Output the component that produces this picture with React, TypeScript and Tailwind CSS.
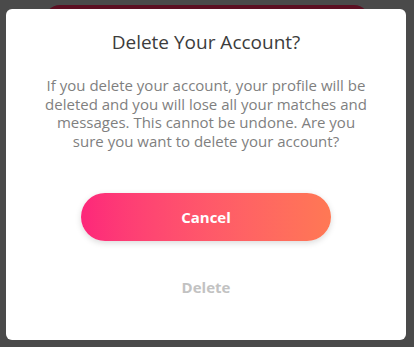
export default function App() {
  return (
    <div className="w-[414px] h-[347px] bg-[#4a4a4a] relative overflow-hidden" style={{ fontFamily: "'Open Sans', 'Liberation Sans', sans-serif" }}>
      <div className="absolute left-[44px] top-[5px] w-[326px] h-[60px] rounded-[16px] bg-[#5c0f22]" />
      <div className="absolute left-[6px] top-[9px] w-[400px] h-[331px] bg-white rounded-[6px] flex flex-col items-center">
        <h1 className="mt-[21px] text-[19px] leading-[24px] text-[#3c3c3c] font-normal">Delete Your Account?</h1>
        <p className="mt-[22px] w-[326px] text-center text-[15px] leading-[18.5px] text-[#7f7f7f]">
          If you delete your account, your profile will be deleted and you will lose all your matches and messages. This cannot be undone. Are you sure you want to delete your account?
        </p>
        <button className="mt-[43px] w-[250px] h-[48px] rounded-full bg-gradient-to-r from-[#fd267a] to-[#ff7854] text-white font-bold text-[15px] shadow-[0_2px_6px_rgba(0,0,0,0.15)]">
          Cancel
        </button>
        <button className="mt-[35px] text-[15px] font-bold text-[#c2c2c2]">Delete</button>
      </div>
    </div>
  );
}
